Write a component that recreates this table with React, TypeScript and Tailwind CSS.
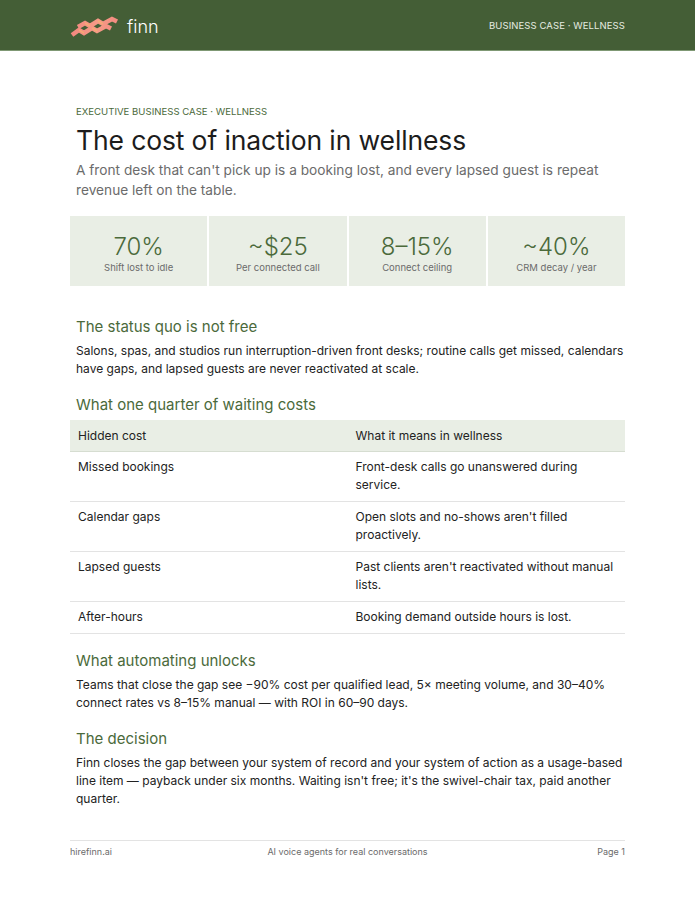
import React from "react";

const stats = [
  { value: "70%", label: "Shift lost to idle" },
  { value: "~$25", label: "Per connected call" },
  { value: "8–15%", label: "Connect ceiling" },
  { value: "~40%", label: "CRM decay / year" },
];

const rows = [
  { cost: "Missed bookings", meaning: "Front-desk calls go unanswered during service." },
  { cost: "Calendar gaps", meaning: "Open slots and no-shows aren't filled proactively." },
  { cost: "Lapsed guests", meaning: "Past clients aren't reactivated without manual lists." },
  { cost: "After-hours", meaning: "Booking demand outside hours is lost." },
];

function Logo() {
  return (
    <svg width="54" height="22" viewBox="0 0 54 22" fill="none">
      <defs>
        <linearGradient id="finnGrad" x1="0" y1="0" x2="54" y2="0" gradientUnits="userSpaceOnUse">
          <stop offset="0" stopColor="#f3877f" />
          <stop offset="0.5" stopColor="#f59a86" />
          <stop offset="1" stopColor="#f3877f" />
        </linearGradient>
      </defs>
      <path
        d="M8 11 L15 7 L20 10 L28 5 L33 8 L42 3 L47 5.5"
        stroke="url(#finnGrad)"
        strokeWidth="4.5"
        strokeLinejoin="miter"
      />
      <path
        d="M2 19 L9 14 L14 17 L22 12 L27 15 L36 10 L41 12.5"
        stroke="url(#finnGrad)"
        strokeWidth="4.5"
        strokeLinejoin="miter"
      />
      <path d="M15 7 L20 10 M28 5 L33 8" stroke="#f7b36f" strokeWidth="1.5" opacity="0.7" />
      <path d="M9 14 L14 17 M22 12 L27 15" stroke="#f7b36f" strokeWidth="1.5" opacity="0.7" />
    </svg>
  );
}

function SectionHeading({ children }: { children: React.ReactNode }) {
  return <h2 className="text-[15px] leading-[20px] text-[#4b6a3b] px-[6px]">{children}</h2>;
}

function Body({ children }: { children: React.ReactNode }) {
  return <p className="mt-[5px] pl-[6px] text-[12px] leading-[18px] text-[#222]">{children}</p>;
}

export default function App() {
  return (
    <div
      className="w-[695px] min-h-[900px] bg-white text-[#222] flex flex-col"
      style={{ fontFamily: "Inter, 'Noto Sans', sans-serif" }}
    >
      {/* Header */}
      <header className="h-[51px] bg-[#445e36] border-b border-[#7f9874] flex items-center justify-between px-[70px] pt-[3px]">
        <div className="flex items-center gap-[3px]">
          <Logo />
          <span className="text-white text-[18px] font-light leading-none">finn</span>
        </div>
        <span className="text-[9.5px] tracking-[0.01em] text-[#e6ece1]">BUSINESS CASE · WELLNESS</span>
      </header>

      <main className="mx-[70px] flex-1 flex flex-col">
        <div className="px-[6px] pt-[55px]">
          <p className="text-[9.6px] leading-[12px] text-[#4b6a3b] uppercase">
            Executive Business Case · Wellness
          </p>
          <h1 className="mt-[6px] text-[26.5px] leading-[32px] text-[#1c1c1c] tracking-[-0.005em]">
            The cost of inaction in wellness
          </h1>
          <p className="mt-[4px] text-[13.7px] leading-[20px] text-[#6b6b6b]">
            A front desk that can't pick up is a booking lost, and every lapsed guest is repeat revenue
            left on the table.
          </p>
        </div>

        {/* Stats */}
        <div className="mt-[16px] grid grid-cols-4 gap-[2px]">
          {stats.map((s) => (
            <div key={s.label} className="h-[70px] pt-[4px] bg-[#e9eee5] flex flex-col items-center justify-center">
              <div className="text-[24px] leading-[28px] text-[#4b6a3b] font-light">{s.value}</div>
              <div className="text-[9.5px] leading-[12px] text-[#6b6b6b] mt-[1px]">{s.label}</div>
            </div>
          ))}
        </div>

        <div className="mt-[31px]">
          <SectionHeading>The status quo is not free</SectionHeading>
          <Body>
            Salons, spas, and studios run interruption-driven front desks; routine calls get missed,
            calendars have gaps, and lapsed guests are never reactivated at scale.
          </Body>
        </div>

        <div className="mt-[17px]">
          <SectionHeading>What one quarter of waiting costs</SectionHeading>
          <table className="mt-[5px] w-full border-collapse text-[12px] leading-[18px]">
            <thead>
              <tr className="bg-[#e9eee5] border-b border-[#d6ddd1]">
                <th className="text-left font-normal px-[8px] pt-[7px] pb-[6px] w-1/2">Hidden cost</th>
                <th className="text-left font-normal px-[8px] pt-[7px] pb-[6px]">What it means in wellness</th>
              </tr>
            </thead>
            <tbody>
              {rows.map((r) => (
                <tr key={r.cost} className="border-b border-[#e3e3e3] align-top">
                  <td className="px-[8px] pt-[6px] pb-[7px]">{r.cost}</td>
                  <td className="px-[8px] pt-[6px] pb-[7px] pr-[10px]">{r.meaning}</td>
                </tr>
              ))}
            </tbody>
          </table>
        </div>

        <div className="mt-[17px]">
          <SectionHeading>What automating unlocks</SectionHeading>
          <Body>
            Teams that close the gap see −90% cost per qualified lead, 5× meeting volume, and 30–40%
            connect rates vs 8–15% manual — with ROI in 60–90 days.
          </Body>
        </div>

        <div className="mt-[17px]">
          <SectionHeading>The decision</SectionHeading>
          <Body>
            Finn closes the gap between your system of record and your system of action as a usage-based
            line item — payback under six months. Waiting isn't free; it's the swivel-chair tax, paid
            another quarter.
          </Body>
        </div>

        <footer className="mt-auto mb-[42px] border-t border-[#e3e3e3] pt-[5px] grid grid-cols-3 text-[9px] leading-[12px] text-[#6b6b6b]">
          <span>hirefinn.ai</span>
          <span className="text-center">AI voice agents for real conversations</span>
          <span className="text-right">Page 1</span>
        </footer>
      </main>
    </div>
  );
}
